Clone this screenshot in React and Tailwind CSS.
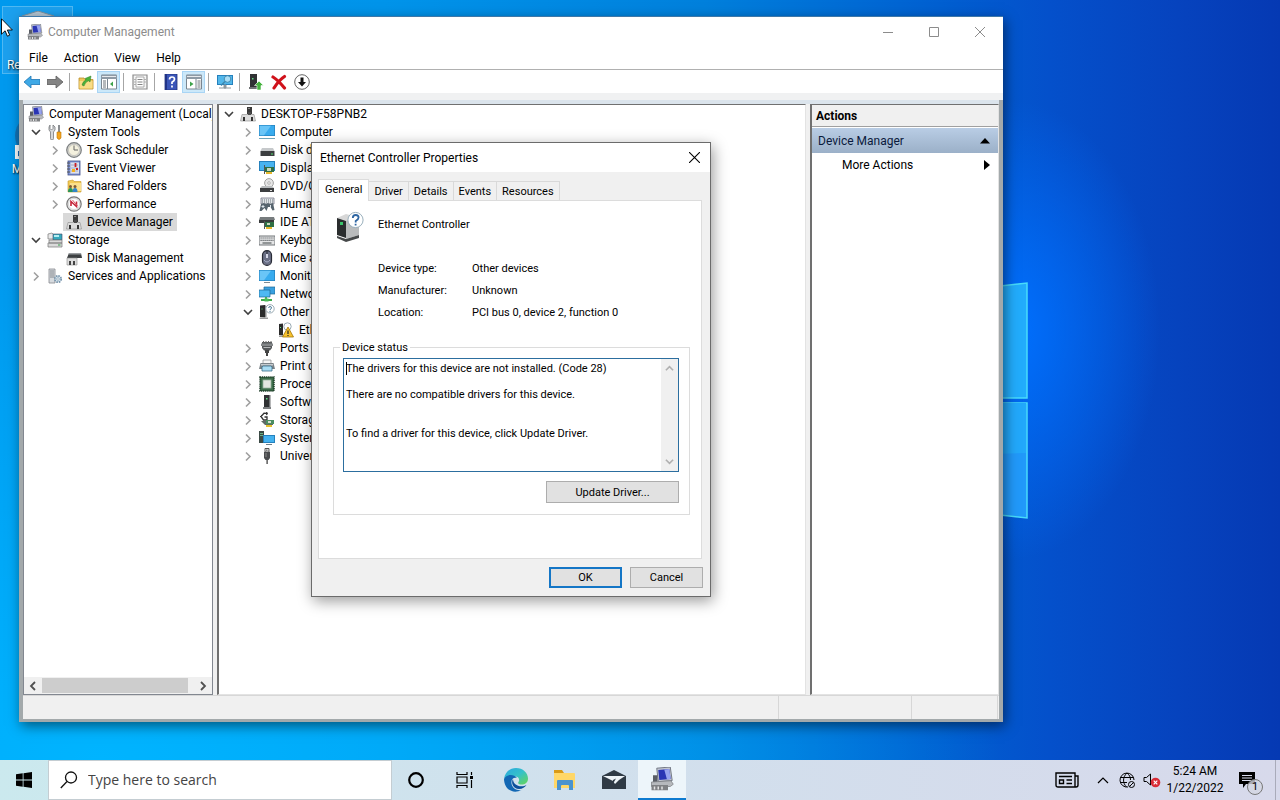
import { useState } from 'react'

const ICONS = {
  pc: (
    <>
      <path d="M4.500.800L13.500 0l1.300 9-9.300.8z" fill="#c3c7d2" stroke="#6a6f7c" strokeWidth=".6" />
      <path d="M5.500 2l7.300-.7 1 6.700-7.600.7z" fill="#2a35b4" />
      <path d="M9.500 1.600l3.300-.3 1 6.700-2.500.3z" fill="#97a3ee" />
      <path d="M2 5.500h3V10H2z" fill="#595d65" />
      <path d="M1 10l13-.8 1.500 2.300-2 1.500H1z" fill="#b6b9bd" stroke="#7c7f83" strokeWidth=".5" />
      <path d="M1 12h11v3.500H1z" fill="#7f8184" />
      <path d="M2.500 13h1v2h-1zM5 13h1v2H5zM7.500 13h1v2h-1z" fill="#e4e4e4" />
    </>
  ),
  tools: (
    <>
      <path d="M3 1v3.500L4.500 6 6 4.500V1l2 2v3L6.500 8v6.500a1.500 1.500 0 01-3 0V8L2 6V3z" fill="#d6d8da" stroke="#77797c" strokeWidth=".8" />
      <path d="M11 1h2v7h-2z" fill="#8b8e92" />
      <path d="M10 8h4v6q-2 3-4 0z" fill="#f5a51d" stroke="#bd7608" strokeWidth=".6" />
    </>
  ),
  clock: (
    <>
      <circle cx="8" cy="8" r="7.300" fill="#d5d5cf" stroke="#7c7f80" strokeWidth="1.200" />
      <circle cx="8" cy="8" r="5.500" fill="#f4f1de" stroke="#aaa" strokeWidth=".5" />
      <path d="M8 3.500V8h4" fill="none" stroke="#666" strokeWidth="1" />
    </>
  ),
  event: (
    <>
      <rect x="2" y="1" width="12" height="14" fill="#8197d8" stroke="#42508c" strokeWidth=".8" />
      <rect x="4.500" y="2.500" width="8.500" height="11" fill="#dfe1ea" />
      <path d="M5 5h7M5 8h7M5 11h7" stroke="#8e9ac4" strokeWidth=".8" />
      <path d="M1 3h3M1 6h3M1 9h3M1 12h3" stroke="#555" strokeWidth="1" />
      <path d="M9.500 3v4" stroke="#c91f25" strokeWidth="1.800" />
      <path d="M6 9h3v3H6z" fill="#f3b020" />
      <path d="M10 8h2v2h-2z" fill="#c91f25" />
    </>
  ),
  shared: (
    <>
      <path d="M2 3l5-1 1 1.500h7V14H2z" fill="#f3cb55" stroke="#c4952a" strokeWidth=".6" />
      <path d="M4 5h11v8H4z" fill="#fbe08b" />
      <circle cx="4.500" cy="8.500" r="1.500" fill="#7d5a36" />
      <path d="M2 14q0-4 2.500-4T7 14z" fill="#28955b" />
      <circle cx="9" cy="8.500" r="1.500" fill="#7d5a36" />
      <path d="M6.500 14q0-4 2.500-4t2.500 4z" fill="#3485c7" />
    </>
  ),
  perf: (
    <>
      <circle cx="8" cy="8" r="7.200" fill="#e9e9e9" stroke="#777" strokeWidth="1.200" />
      <circle cx="8" cy="8" r="5.500" fill="#fff" stroke="#bbb" strokeWidth=".5" />
      <path d="M5 10V5.500l5.500 5V5.500" fill="none" stroke="#c52339" strokeWidth="1.600" />
      <path d="M6.500 4l5 6" stroke="#d85a68" strokeWidth="1" />
    </>
  ),
  device: (
    <>
      <path d="M7 1h5v7H7z" fill="#3a3a3a" />
      <path d="M8 2h2v1H8z" fill="#8c8c8c" />
      <path d="M2 8.500h12l1.500 6.500H.5z" fill="#dcdcdc" stroke="#8c8c8c" strokeWidth=".6" />
      <path d="M3 11h2v4H3zM11 11h2v4h-2z" fill="#333" />
      <path d="M8 6h3v3H8z" fill="#4b4b4b" />
    </>
  ),
  storage: (
    <>
      <path d="M1 2l4-1 2 2v4H1z" fill="#e8e8e8" stroke="#777" strokeWidth=".7" />
      <path d="M6 2h9v6H6z" fill="#35a9bd" stroke="#446" strokeWidth=".6" />
      <path d="M7 3h5v2H7z" fill="#b5edf1" />
      <path d="M2 8h13v3H2zM1 11h14v4H1z" fill="#dadada" stroke="#777" strokeWidth=".7" />
      <path d="M11 12.500h2.500v1H11z" fill="#35a04a" />
    </>
  ),
  diskmgmt: (
    <>
      <path d="M3 3h12l1 5H1z" fill="#3d4042" />
      <path d="M3 3h12v1.500H2.600z" fill="#9a9da0" />
      <path d="M1 8h10v7H1z" fill="#dedede" stroke="#8b8b8b" strokeWidth=".6" />
      <path d="M3 11h2v4H3zM7 11h2v4H7z" fill="#444" />
    </>
  ),
  services: (
    <>
      <path d="M2 1h6v14H2z" fill="#d7dbdf" stroke="#85898d" strokeWidth=".8" />
      <path d="M3 3h4M3 5h4M3 7h4M3 9h4" stroke="#72777b" strokeWidth=".8" />
      <circle cx="11" cy="11" r="3.200" fill="#dbe6ee" stroke="#7795ac" strokeWidth="1.700" strokeDasharray="1.600 .9" />
      <circle cx="11" cy="11" r="1.300" fill="#fff" stroke="#7795ac" strokeWidth=".7" />
    </>
  ),
  monitor: (
    <>
      <path d="M0 1h16v11H0z" fill="#2581bd" />
      <path d="M.7 1.700h14.600v9.600H.7z" fill="#38abee" />
      <path d="M.7 1.700H12L5 11.300H.7z" fill="#6ac5f7" />
      <path d="M0 14.500h16" stroke="#6fa5bb" strokeWidth="1" />
    </>
  ),
  screen: (
    <>
      <path d="M0 2h16v11H0z" fill="#2581bd" />
      <path d="M.7 2.700h14.600v9.600H.7z" fill="#38abee" />
      <path d="M.7 2.700H12L5 12.300H.7z" fill="#6ac5f7" />
      <path d="M5 14h6v1H5z" fill="#7e8b93" />
    </>
  ),
  disk: (
    <>
      <path d="M3 6h11l1.500 3h-14z" fill="#c6c9cb" />
      <path d="M1.500 9h14v5h-14z" fill="#3c3e40" />
      <path d="M12 11.500h2v1h-2z" fill="#4fe06a" />
    </>
  ),
  display: (
    <>
      <path d="M0 1h16v10H0z" fill="#2581bd" />
      <path d="M1 2h14v8H1z" fill="#48b3ef" />
      <path d="M6 7h9v5H6z" fill="#2f7045" />
      <path d="M8 8h4v3H8z" fill="#c9d7bd" />
      <path d="M7 12h6v2H7z" fill="#e6b62c" />
      <path d="M5 5h1v9H5z" fill="#555" />
    </>
  ),
  dvd: (
    <>
      <circle cx="10" cy="5" r="4.400" fill="#e6e6e6" stroke="#8d8d8d" strokeWidth=".8" />
      <circle cx="10" cy="5" r="1.300" fill="#fff" stroke="#888" strokeWidth=".6" />
      <path d="M3 8h10l2 2H1z" fill="#b9bcbe" />
      <path d="M1 10h14v4H1z" fill="#3c3e40" />
      <path d="M11 12h2v1h-2z" fill="#ddd" />
    </>
  ),
  hid: (
    <>
      <path d="M2 2h13v6H2z" fill="#e0e4e7" stroke="#778" strokeWidth=".8" />
      <path d="M3 4h11M3 6h11" stroke="#69757d" strokeWidth="1" strokeDasharray="1 1" />
      <path d="M2 8l3-1 2 1 2-1 2 1 3-1 1.500 7-2 .5-2-3.500H9L7.500 15l-2-3-3 3H.5z" fill="#56646e" />
      <path d="M4 9v3M2.500 10.500h3M11.500 9v3" stroke="#dfe7ee" strokeWidth="1" />
    </>
  ),
  ide: (
    <>
      <path d="M1 3h14l1 3H0z" fill="#777c7e" />
      <path d="M0 6h15v3H0z" fill="#393b3c" />
      <path d="M6 8h9v5H6z" fill="#2f7045" />
      <path d="M8 9h3v2H8z" fill="#c9d7bd" />
      <path d="M7 13h6v2H7z" fill="#e6b62c" />
      <path d="M5 7h1v8H5z" fill="#555" />
    </>
  ),
  keyboard: (
    <>
      <rect x="0" y="4" width="16" height="9" fill="#e4e5e6" stroke="#63676a" strokeWidth=".9" />
      <path d="M1.500 6h13M1.500 8.300h13" stroke="#5b5f62" strokeWidth="1.200" strokeDasharray="1.200 .8" />
      <path d="M3.500 11h9" stroke="#5b5f62" strokeWidth="1.200" />
    </>
  ),
  mouse: (
    <>
      <rect x="3.500" y=".6" width="9" height="14.800" rx="4.500" fill="#6b7086" stroke="#282b36" strokeWidth="1.200" />
      <path d="M8 1v7" stroke="#22242c" strokeWidth="1" />
      <path d="M7 4h2v4H7z" fill="#d5d8e8" />
      <path d="M5 10q3 4 6 0" fill="none" stroke="#a7adc7" strokeWidth="1" />
    </>
  ),
  network: (
    <>
      <path d="M5 1h11v7H5z" fill="#39a0df" stroke="#1e6797" strokeWidth=".7" />
      <path d="M0 4h11v7H0z" fill="#4fb9f2" stroke="#1e6797" strokeWidth=".7" />
      <path d="M7 11v2M2 14h11" stroke="#3eaa4c" strokeWidth="1.800" />
      <path d="M5.500 12.500h4v3h-4z" fill="#4cbd59" />
    </>
  ),
  other: (
    <>
      <path d="M1 1.500l5-.5v12.500L1 13z" fill="#2b2b2b" />
      <path d="M6 1l1.500 1v11L6 13.500z" fill="#8a8a8a" />
      <path d="M1 13.500h8V15H.5z" fill="#9c9c9c" />
      <path d="M2.500 4.500h1v1h-1z" fill="#54e07a" />
      <circle cx="11" cy="4.800" r="4.200" fill="#fff" stroke="#8fa0aa" strokeWidth=".9" />
      <path d="M9.700 4q0-1.500 1.400-1.500T12.500 4q0 .7-1.400 1.500v.7M11 7v1" fill="none" stroke="#4a7c99" strokeWidth="1" />
    </>
  ),
  unknown: (
    <>
      <path d="M1 2l4-.5v12L1 13z" fill="#2b2b2b" />
      <path d="M1 13.500h5V15H1z" fill="#9c9c9c" />
      <path d="M2 5h1v1H2z" fill="#54e07a" />
      <circle cx="9.500" cy="4.500" r="3.700" fill="#fff" stroke="#8fa0aa" strokeWidth=".9" />
      <path d="M10 5l5.500 10h-11z" fill="#f8c22c" stroke="#a2760a" strokeWidth=".8" />
      <path d="M10 8.500v3.500M10 13v1" stroke="#222" strokeWidth="1.200" />
    </>
  ),
  port: (
    <>
      <path d="M3 2h10v6l-2 2.500H5L3 8z" fill="#55585a" />
      <path d="M2 3.500h12v2.500H2z" fill="#85888a" />
      <path d="M4.500 1v2M7 1v2M9.500 1v2M12 1v2" stroke="#666" strokeWidth="1" />
      <path d="M6 10h4v3H6zM7 13h2v3H7z" fill="#444" />
      <path d="M4.500 7.500h7" stroke="#b5b7b9" strokeWidth="1" />
    </>
  ),
  printer: (
    <>
      <path d="M4 2h8v4H4z" fill="#f6f6f6" stroke="#8a8d8f" strokeWidth=".7" />
      <path d="M1.500 5h13L16 11H0z" fill="#7a8287" />
      <path d="M2 6h12v1.500H2z" fill="#c6ccd0" />
      <path d="M3 9l1-1h8l1 1v4H3z" fill="#a9dcf3" stroke="#3b6f8a" strokeWidth=".8" />
    </>
  ),
  cpu: (
    <>
      <rect x="1" y="1" width="14" height="14" fill="#3c6d4a" stroke="#1d3d28" strokeWidth="1.500" strokeDasharray="1.200 .7" />
      <rect x="4" y="4" width="8" height="8" fill="#e3e6e1" stroke="#9bb3a0" strokeWidth=".8" />
    </>
  ),
  software: (
    <>
      <path d="M5 1h6v12H5z" fill="#303234" />
      <path d="M10 1h1.500v12H10z" fill="#6e7173" />
      <path d="M7 4h1.500v1.500H7z" fill="#5fe083" />
      <path d="M4 13h8v2H4z" fill="#7c7f81" />
    </>
  ),
  storagectl: (
    <>
      <path d="M8 1.500L5 1.200 2 4.500 4.500 8H8V5H5.500" fill="none" stroke="#333" strokeWidth="1.300" />
      <path d="M7 0l2 1.500L7 3M3 3L1 5" fill="none" stroke="#333" strokeWidth="1" />
      <path d="M2 9h12v4H6z" fill="#5f6b65" />
      <path d="M7 8h8v4H7z" fill="#4b8f62" />
      <path d="M9 9h3v2H9z" fill="#d8dfcf" />
      <path d="M7 13h6v2H7z" fill="#e6c12c" />
    </>
  ),
  system: (
    <>
      <path d="M0 1h5v12H0z" fill="#3b4a45" />
      <path d="M1 3h3v1H1zM1 5h3v1H1z" fill="#68b083" />
      <path d="M4 5h12v8H4z" fill="#2581bd" />
      <path d="M5 6h10v6H5z" fill="#44b2ef" />
      <path d="M7 14h6v1H7z" fill="#6d7d86" />
    </>
  ),
  usb: (
    <>
      <path d="M6 .500h4v3.500H6z" fill="#fff" stroke="#555" strokeWidth="1" />
      <path d="M7 1.500h.8v1.300H7zM8.500 1.500h.8v1.300h-.8z" fill="#333" />
      <path d="M5 4h6v6l-1.500 2h-3L5 10z" fill="#4a4c4e" />
      <path d="M6.500 5h1v4h-1z" fill="#888" />
      <path d="M7.500 12h1.200v4H7.500z" fill="#333" />
    </>
  ),
  back: <path d="M0 8l7-6v3.500h9v5H7V14z" fill="#3fa9e6" stroke="#1f77b5" strokeWidth=".8" />,
  forward: <path d="M16 8L9 2v3.500H0v5h9V14z" fill="#848484" stroke="#5d5d5d" strokeWidth=".8" />,
  up: (
    <>
      <path d="M1 4h5l1 1.500h8V15H1z" fill="#f0c75a" stroke="#b98d28" strokeWidth=".8" />
      <path d="M1.500 7h13v7.500h-13z" fill="#f9dd86" />
      <path d="M4 11q1-4 4-5L7 4.500 13 2l-1 6-1.500-1.200Q7 8 6 12z" fill="#4bb33b" stroke="#2f7d26" strokeWidth=".5" />
    </>
  ),
  consoleTree: (
    <>
      <path d="M.5 1h15v14H.5z" fill="#fff" stroke="#7a8691" strokeWidth="1" />
      <path d="M0 1h16v4H0z" fill="#8e9aa5" />
      <path d="M1 2.500h14" stroke="#fff" strokeWidth=".8" />
      <path d="M6.500 5v10" stroke="#7a8691" strokeWidth="1" />
      <path d="M2 7h3M2 9h3M2 11h3M2 13h3" stroke="#5b646c" strokeWidth=".9" />
      <path d="M12 7.500v5L9 10z" fill="#3ea34b" />
    </>
  ),
  actionPane: (
    <>
      <path d="M.5 1h15v14H.5z" fill="#fff" stroke="#7a8691" strokeWidth="1" />
      <path d="M0 1h16v4H0z" fill="#8e9aa5" />
      <path d="M1 2.500h14" stroke="#fff" strokeWidth=".8" />
      <path d="M10 5v10" stroke="#7a8691" strokeWidth="1" />
      <path d="M11.500 7h3M11.500 9h3M11.500 11h3M11.500 13h3" stroke="#5b646c" strokeWidth=".9" />
      <path d="M4 7.500v5L7.500 10z" fill="#3ea34b" />
    </>
  ),
  props: (
    <>
      <path d="M1 1h14v14H1z" fill="#f5f5f5" stroke="#8d8d8d" strokeWidth="1.200" />
      <path d="M4 3h8v10H4z" fill="#fff" stroke="#999" strokeWidth=".8" />
      <path d="M5.500 5.500h5M5.500 8h5M5.500 10.500h5" stroke="#777" strokeWidth=".9" />
      <path d="M2 5.500h2M2 8h2M2 10.500h2M12 5.500h2M12 8h2" stroke="#aaa" strokeWidth=".9" />
    </>
  ),
  help: (
    <>
      <path d="M2 0h12v16H2z" fill="#3a55b8" stroke="#203078" strokeWidth=".8" />
      <path d="M2 0h2v16H2z" fill="#213487" />
      <path d="M6.500 5.500q0-2.500 2.500-2.500t2.500 2.300q0 1.500-2.500 3V10M9 11.500v2" fill="none" stroke="#fff" strokeWidth="1.700" />
    </>
  ),
  scan: (
    <>
      <path d="M0 1h16v10H0z" fill="#2581bd" />
      <path d="M1 2h14v8H1z" fill="#52b7ea" />
      <circle cx="10.500" cy="5" r="3.300" fill="#a9def7" stroke="#3c86ad" strokeWidth=".9" />
      <path d="M8 7.500L4 11.500" stroke="#3c86ad" strokeWidth="1.500" />
      <path d="M2 14h12M7 11h2v3H7z" fill="#8d989e" stroke="#8d989e" strokeWidth="1" />
    </>
  ),
  update: (
    <>
      <path d="M2 0h7v13H2z" fill="#303234" />
      <path d="M4 4h1.500v1.500H4z" fill="#5fe083" />
      <path d="M1 13h8v2H1z" fill="#707375" />
      <path d="M11 7l4.500 4.500h-2.500V16H9v-4.500H6.500z" fill="#45b23e" stroke="#fff" strokeWidth=".6" />
    </>
  ),
  remove: <path d="M2 3q5 3 11.500 11M13.500 2.500Q8 6 3 14" fill="none" stroke="#d0121b" strokeWidth="3.200" strokeLinecap="round" />,
  disable: (
    <>
      <circle cx="8" cy="8" r="7.300" fill="#fff" stroke="#666" strokeWidth="1" />
      <path d="M6.500 3.500h3V8H12l-4 4.500L4 8h2.500z" fill="#111" />
    </>
  ),
}

function Icon({ name, className = 'size-4' }) {
  return (
    <svg viewBox="0 0 16 16" className={`${className} shrink-0`} aria-hidden="true">
      {ICONS[name]}
    </svg>
  )
}

const CONSOLE_TREE = [
  { level: 0, icon: 'pc', label: 'Computer Management (Local)' },
  { level: 1, icon: 'tools', label: 'System Tools', state: 'open' },
  { level: 2, icon: 'clock', label: 'Task Scheduler', state: 'closed' },
  { level: 2, icon: 'event', label: 'Event Viewer', state: 'closed' },
  { level: 2, icon: 'shared', label: 'Shared Folders', state: 'closed' },
  { level: 2, icon: 'perf', label: 'Performance', state: 'closed' },
  { level: 2, icon: 'device', label: 'Device Manager', selected: true },
  { level: 1, icon: 'storage', label: 'Storage', state: 'open' },
  { level: 2, icon: 'diskmgmt', label: 'Disk Management' },
  { level: 1, icon: 'services', label: 'Services and Applications', state: 'closed' },
]

const DEVICE_TREE = [
  { level: 1, icon: 'device', label: 'DESKTOP-F58PNB2', state: 'open' },
  { level: 2, icon: 'monitor', label: 'Computer', state: 'closed' },
  { level: 2, icon: 'disk', label: 'Disk drives', state: 'closed' },
  { level: 2, icon: 'display', label: 'Display adapters', state: 'closed' },
  { level: 2, icon: 'dvd', label: 'DVD/CD-ROM drives', state: 'closed' },
  { level: 2, icon: 'hid', label: 'Human Interface Devices', state: 'closed' },
  { level: 2, icon: 'ide', label: 'IDE ATA/ATAPI controllers', state: 'closed' },
  { level: 2, icon: 'keyboard', label: 'Keyboards', state: 'closed' },
  { level: 2, icon: 'mouse', label: 'Mice and other pointing devices', state: 'closed' },
  { level: 2, icon: 'screen', label: 'Monitors', state: 'closed' },
  { level: 2, icon: 'network', label: 'Network adapters', state: 'closed' },
  { level: 2, icon: 'other', label: 'Other devices', state: 'open' },
  { level: 3, icon: 'unknown', label: 'Ethernet Controller' },
  { level: 2, icon: 'port', label: 'Ports (COM & LPT)', state: 'closed' },
  { level: 2, icon: 'printer', label: 'Print queues', state: 'closed' },
  { level: 2, icon: 'cpu', label: 'Processors', state: 'closed' },
  { level: 2, icon: 'software', label: 'Software devices', state: 'closed' },
  { level: 2, icon: 'storagectl', label: 'Storage controllers', state: 'closed' },
  { level: 2, icon: 'system', label: 'System devices', state: 'closed' },
  { level: 2, icon: 'usb', label: 'Universal Serial Bus controllers', state: 'closed' },
]

const LEVEL_PAD = ['pl-0', 'pl-0', 'pl-[19px]', 'pl-[38px]']

const TOOLBAR = [
  ['back', 'forward'],
  ['up', 'consoleTree'],
  ['props'],
  ['help', 'actionPane'],
  ['scan'],
  ['update', 'remove', 'disable'],
]

const TOOL_LABELS = {
  back: 'Back',
  forward: 'Forward',
  up: 'Up one level',
  consoleTree: 'Show/Hide Console Tree',
  props: 'Properties',
  help: 'Help',
  actionPane: 'Show/Hide Action Pane',
  scan: 'Scan for hardware changes',
  update: 'Update driver',
  remove: 'Uninstall device',
  disable: 'Disable device',
}

const STATUS_TEXT = `The drivers for this device are not installed. (Code 28)

There are no compatible drivers for this device.


To find a driver for this device, click Update Driver.`

function Twisty({ state }) {
  return (
    <svg viewBox="0 0 16 16" className="w-4 h-4 shrink-0" fill="none" strokeWidth="1.600" aria-hidden="true">
      {state === 'open' && <path d="M4 6l4 4 4-4" stroke="#404040" />}
      {state === 'closed' && <path d="M6 4.500l4 4-4 4" stroke="#a0a0a0" />}
    </svg>
  )
}

function Tree({ items, label, className = 'pl-1' }) {
  return (
    <ul role="tree" aria-label={label} className={className}>
      {items.map(item => (
        <li
          key={item.label}
          role="treeitem"
          aria-level={item.level + 1}
          aria-selected={!!item.selected}
          className={`flex h-[18px] items-center ${LEVEL_PAD[item.level]}`}
        >
          {item.level > 0 && <Twisty state={item.state} />}
          <span className={`flex h-full items-center gap-[5px] whitespace-nowrap pr-1 ${item.level > 0 ? 'pl-[3px]' : ''} ${item.selected ? 'bg-[#d9d9d9]' : ''}`}>
            <Icon name={item.icon} />
            {item.label}
          </span>
        </li>
      ))}
    </ul>
  )
}

function Toolbar() {
  return (
    <div className="flex h-[23px] shrink-0 items-center bg-white pl-px" role="toolbar">
      {TOOLBAR.map((group, i) => (
        <div key={group[0]} className="flex items-center">
          {i > 0 && <span className="mr-1 ml-[3px] h-[18px] w-px bg-[#a6a6a6]" />}
          {group.map(name => (
            <button
              key={name}
              type="button"
              aria-label={TOOL_LABELS[name]}
              className={`flex h-[22px] w-[23px] items-center justify-center ${
                name === 'consoleTree' || name === 'actionPane' ? 'border border-[#a9d5f5] bg-[#cce8f9]' : ''
              }`}
            >
              <Icon name={name} />
            </button>
          ))}
        </div>
      ))}
    </div>
  )
}

function ManagementWindow() {
  return (
    <section
      aria-label="Computer Management"
      className="absolute top-4 right-[277px] bottom-[38px] left-[19px] flex flex-col bg-white text-xs text-black border-t border-[#3f78a8] shadow-[2px_4px_12px_rgba(0,0,0,0.5)]"
    >
      <header className="flex h-[30px] shrink-0 items-center pl-2">
        <Icon name="pc" />
        <h1 className="flex-1 pl-[5px] text-[#8c8c8c]">Computer Management</h1>
        <button type="button" aria-label="Minimize" className="flex h-full w-[46px] items-center justify-center">
          <svg viewBox="0 0 10 10" className="size-[10px]"><path d="M0 5.500h10" stroke="#8c8c8c" /></svg>
        </button>
        <button type="button" aria-label="Maximize" className="flex h-full w-[46px] items-center justify-center">
          <svg viewBox="0 0 10 10" className="size-[10px]"><path d="M.5.500h9v9h-9z" fill="none" stroke="#8c8c8c" /></svg>
        </button>
        <button type="button" aria-label="Close" className="flex h-full w-[46px] items-center justify-center">
          <svg viewBox="0 0 10 10" className="size-[10px]"><path d="M0 0l10 10M10 0L0 10" stroke="#8c8c8c" /></svg>
        </button>
      </header>

      <nav className="flex h-[23px] shrink-0 items-center border-b border-[#b0b0b0] pl-[2px]">
        {['File', 'Action', 'View', 'Help'].map(m => (
          <button key={m} type="button" className="px-2">{m}</button>
        ))}
      </nav>

      <Toolbar />
      <div className="h-[7px] shrink-0 bg-[#f0f1f2]" />

      <div className="flex min-h-0 flex-1 flex-col border-x-4 border-b-3 border-[#a3a9ab]">
        <div className="flex min-h-0 flex-1 gap-1 bg-[#f0f0f0] border-t-4 border-[#dbe4ec]">
          <aside className="flex w-[190px] shrink-0 flex-col border border-[#828790] bg-white">
            <div className="flex-1 overflow-hidden">
              <Tree items={CONSOLE_TREE} label="Console tree" />
            </div>
            <div className="flex h-[17px] items-center bg-[#f0f0f0]">
              <button type="button" aria-label="Scroll left" className="flex w-[18px] justify-center">
                <svg viewBox="0 0 10 10" className="size-[10px]"><path d="M7 1L3 5l4 4" fill="none" stroke="#505050" strokeWidth="1.800" /></svg>
              </button>
              <span className="h-[15px] w-[146px] bg-[#cdcdcd]" />
              <button type="button" aria-label="Scroll right" className="ml-auto flex w-[18px] justify-center">
                <svg viewBox="0 0 10 10" className="size-[10px]"><path d="M3 1l4 4-4 4" fill="none" stroke="#505050" strokeWidth="1.800" /></svg>
              </button>
            </div>
          </aside>

          <main className="min-w-0 flex-1 border border-l-2 border-[#707070] border-r-[#e3e3e3] border-b-[#e3e3e3] bg-white">
            <Tree items={DEVICE_TREE} label="Devices" className="pl-[2px]" />
          </main>

          <aside className="w-[189px] shrink-0 border border-l-2 border-[#707070] border-r-[#e3e3e3] border-b-[#e3e3e3] bg-white">
            <h2 className="h-[22px] border-b border-[#a0a0a0] bg-[#f0f0f0] pl-1 leading-[22px] font-bold">Actions</h2>
            <button type="button" className="mt-px flex h-[25px] w-full items-center justify-between bg-linear-to-b from-[#b9cde5] to-[#9bb0c8] pr-2 pl-[6px] text-[#0b1a3c]">
              Device Manager
              <svg viewBox="0 0 10 6" className="h-[6px] w-[10px]"><path d="M5 0l5 5.500H0z" fill="#000" /></svg>
            </button>
            <button type="button" className="flex h-6 w-full items-center justify-between pr-2 pl-[30px]">
              More Actions
              <svg viewBox="0 0 6 10" className="h-[10px] w-[6px]"><path d="M0 0l6 5-6 5z" fill="#000" /></svg>
            </button>
          </aside>
        </div>

        <footer className="flex h-[24px] shrink-0 justify-end border-t border-[#d7d7d7] bg-[#f0f0f0]">
          <span className="w-[133px] border-l border-[#d7d7d7]" />
          <span className="mr-px w-[87px] border-x border-[#d7d7d7]" />
        </footer>
      </div>
    </section>
  )
}

function DialogIcon() {
  return (
    <svg viewBox="0 0 32 32" className="size-8" aria-hidden="true">
      <path d="M1 7l9-4 11 3-11 5z" fill="#d8d8d8" />
      <path d="M1 7l9 3v17l-9-3z" fill="#2a2d2e" />
      <path d="M10 10l13-4v18l-13 4z" fill="#b9bbbc" />
      <path d="M1 25l9 3 13-4v3l-13 4-9-4z" fill="#46494a" />
      <path d="M4 11h3v3H4z" fill="#39c46b" />
      <circle cx="19.500" cy="9" r="7.600" fill="#fff" stroke="#9ab0bd" strokeWidth="1" />
      <path d="M16.800 7q0-3 2.900-3t2.900 2.600q0 1.700-2.900 3.400V11.500M19.600 12.800v1.700" fill="none" stroke="#2e66a3" strokeWidth="1.800" />
    </svg>
  )
}

function PropertiesDialog() {
  const [tab, setTab] = useState('General')
  const rows = [
    ['Device type:', 'Other devices'],
    ['Manufacturer:', 'Unknown'],
    ['Location:', 'PCI bus 0, device 2, function 0'],
  ]

  return (
    <section
      role="dialog"
      aria-labelledby="props-title"
      className="absolute top-[142px] left-[311px] w-[400px] border border-[#6b6b6b] bg-[#f0f0f0] pb-2 text-[11px] leading-[13px] text-black shadow-[2px_4px_14px_rgba(0,0,0,0.4)]"
    >
      <header className="flex h-[29px] items-center justify-between bg-white pl-2">
        <h2 id="props-title" className="text-xs">Ethernet Controller Properties</h2>
        <button type="button" aria-label="Close" className="flex h-full w-[31px] items-center justify-center">
          <svg viewBox="0 0 10 10" className="size-[11px]"><path d="M0 0l10 10M10 0L0 10" stroke="#000" /></svg>
        </button>
      </header>

      <div className="pt-[7px] pr-2 pl-[6px]">
        <div role="tablist" className="flex items-end">
          {['General', 'Driver', 'Details', 'Events', 'Resources'].map(t => (
            <button
              key={t}
              type="button"
              role="tab"
              aria-selected={t === tab}
              onClick={() => setTab(t)}
              className={
                t === tab
                  ? 'z-10 -mb-px h-[22px] border border-b-0 border-[#dcdcdc] bg-white px-[6px] pb-[3px]'
                  : 'h-[19px] border border-b-0 border-l-0 border-[#d9d9d9] px-[5px]'
              }
            >
              {t}
            </button>
          ))}
        </div>

        <div role="tabpanel" className="border border-[#dcdcdc] bg-white px-[14px] pt-[10px] pb-[43px]">
          <div className="flex gap-[10px] pl-[3px]">
            <DialogIcon />
            <p className="pt-[7px]">Ethernet Controller</p>
          </div>
          <dl className="grid grid-cols-[94px_1fr] gap-y-[9px] pt-[19px] pl-[45px]">
            {rows.map(([k, v]) => (
              <div key={k} className="contents">
                <dt>{k}</dt>
                <dd>{v}</dd>
              </div>
            ))}
          </dl>

          <fieldset className="mt-[22px] mr-[-3px] border border-[#dcdcdc] pr-[10px] pb-[11px] pl-[9px]">
            <legend className="-ml-[3px] px-[2px]">
              <label htmlFor="status">Device status</label>
            </legend>
            <div className="relative mt-1 flex h-[114px] border border-[#2c6e9f] bg-white">
              <textarea
                id="status"
                readOnly
                value={STATUS_TEXT}
                className="block flex-1 resize-none overflow-hidden bg-white px-[2px] pt-[3px] outline-none"
              />
              <span className="absolute top-[3px] left-[2px] h-[13px] w-px bg-black" />
              <div className="flex w-[17px] flex-col items-center justify-between bg-[#f0f0f0] py-[5px]">
                <svg viewBox="0 0 10 10" className="size-[9px]"><path d="M1 7l4-4 4 4" fill="none" stroke="#b0b0b0" strokeWidth="1.800" /></svg>
                <svg viewBox="0 0 10 10" className="size-[9px]"><path d="M1 3l4 4 4-4" fill="none" stroke="#b0b0b0" strokeWidth="1.800" /></svg>
              </div>
            </div>
            <div className="mt-[9px] flex justify-end">
              <button type="button" className="h-[22px] w-[133px] border border-[#adadad] bg-[#e1e1e1]">Update Driver...</button>
            </div>
          </fieldset>
        </div>
      </div>

      <div className="flex justify-end gap-2 px-[7px] pt-2">
        <button type="button" className="h-[21px] w-[73px] border-2 border-[#1476c6] bg-[#e1e1e1]">OK</button>
        <button type="button" className="h-[21px] w-[73px] border border-[#adadad] bg-[#e1e1e1]">Cancel</button>
      </div>
    </section>
  )
}

function Wallpaper() {
  return (
    <>
      <div className="absolute inset-0 bg-[linear-gradient(90deg,#0099ee_0%,#0094ea_30%,#0080dc_55%,#0062d2_72%,#0450cb_82%,#0643be_92%,#0539b3_100%)]" />
      <div className="absolute inset-0 bg-[radial-gradient(ellipse_150px_230px_at_1010px_330px,#0070ff,transparent)]" />
      <div className="absolute inset-0 bg-[radial-gradient(ellipse_900px_500px_at_100px_760px,#00b4ff,transparent)]" />
      <svg viewBox="0 0 100 240" className="absolute top-[280px] left-[928px] h-[240px] w-[100px]" aria-hidden="true">
        <path d="M0 14l99-11v115H0z" fill="#22acfc" stroke="#48dcfb" strokeWidth="1.500" />
        <path d="M0 123h99v115L0 227z" fill="#2199fa" stroke="#48dcfb" strokeWidth="1.500" />
        <path d="M0 123h98v50l-98 3z" fill="#22a8fb" />
      </svg>
    </>
  )
}

function DesktopIcons() {
  return (
    <>
      <div className="absolute top-[6px] left-[2px] flex h-[68px] w-[71px] flex-col items-center justify-between border border-[#4fb8f2] bg-[#2fa5ee]/60 text-xs text-white">
        <svg viewBox="0 0 40 44" className="mt-1 h-11 w-10" aria-hidden="true">
          <path d="M4 5l16-5 16 5-4 38H8z" fill="#b4c6d4" stroke="#80929f" />
          <path d="M4 5l16 4 16-4" fill="none" stroke="#7b8b97" />
        </svg>
        <span className="whitespace-nowrap [text-shadow:1px_1px_2px_#000]">Recycle Bin</span>
      </div>
      <div className="absolute top-[112px] left-[2px] flex w-[71px] flex-col items-center text-xs text-white">
        <svg viewBox="0 0 48 48" className="size-12" aria-hidden="true">
          <circle cx="24" cy="24" r="23" fill="#1375b8" />
          <path d="M1 33h14v14H1z" fill="#fff" />
          <path d="M4 44v-5h5v-3l4 5-4 4" fill="#1c66b0" />
        </svg>
        <span className="pt-[2px] text-center leading-[15px] [text-shadow:1px_1px_2px_#000]">Microsoft Edge</span>
      </div>
    </>
  )
}

function Cursor() {
  return (
    <svg viewBox="0 0 12 19" className="absolute top-[18px] left-px h-[19px] w-3" aria-hidden="true">
      <path d="M.5.800v15.400l3.600-3.400 2.300 5.400 2.300-1-2.300-5.200h5z" fill="#fff" stroke="#000" strokeWidth=".9" />
    </svg>
  )
}

function Taskbar() {
  const btn = 'flex h-full w-[49px] items-center justify-center'
  return (
    <footer className="flex h-10 shrink-0 items-center bg-linear-to-r from-[#cbe9ee] via-[#d0e1ed] via-40% to-[#d7d9eb] text-xs text-black">
      <button type="button" aria-label="Start" className="flex h-full w-12 items-center justify-center">
        <svg viewBox="0 0 16 16" className="size-4">
          <path d="M0 2.300l6.700-1v6.300H0zM7.500 1.200L16 0v7.600H7.500zM0 8.400h6.700v6.300l-6.700-1zM7.500 8.400H16V16l-8.500-1.200z" fill="#000" />
        </svg>
      </button>
      <label className="flex h-full w-[344px] items-center border border-[#c4cdd2] bg-white pl-[11px]">
        <svg viewBox="0 0 18 18" className="size-[18px] shrink-0" fill="none" stroke="#111" strokeWidth="1.300">
          <circle cx="11" cy="6.500" r="5.500" />
          <path d="M7 10.500L.8 17" />
        </svg>
        <input
          type="text"
          aria-label="Search"
          placeholder="Type here to search"
          className="ml-[10px] w-full bg-transparent font-['Open_Sans','Noto_Sans',sans-serif] text-sm text-[#444] outline-none placeholder:text-[#444]"
        />
      </label>

      <button type="button" aria-label="Cortana" className="flex h-full w-12 items-center justify-center">
        <svg viewBox="0 0 18 18" className="size-[18px]"><circle cx="9" cy="9" r="6.800" fill="none" stroke="#000" strokeWidth="2.200" /></svg>
      </button>
      <button type="button" aria-label="Task View" className={btn}>
        <svg viewBox="0 0 18 16" className="h-4 w-[18px]" fill="none" stroke="#000" strokeWidth="1.200">
          <path d="M1 0v2.500h10V0M1 16v-2.500h10V16M1 5h10v6H1zM15.500 0v3M15.500 8v8" />
          <path d="M14 4h3v3h-3z" fill="#000" stroke="none" />
        </svg>
      </button>
      <button type="button" aria-label="Microsoft Edge" className={`${btn} ml-[2px]`}>
        <svg viewBox="0 0 24 24" className="size-6">
          <defs>
            <linearGradient id="edgeTop" x1="0" x2="1" y1="0" y2="1">
              <stop offset="0" stopColor="#2aa7e0" />
              <stop offset=".5" stopColor="#35c1c9" />
              <stop offset="1" stopColor="#67d653" />
            </linearGradient>
          </defs>
          <path d="M0 11C1 4 6 0 12 0c7 0 12 5 12 10.500 0 4-3 6-6.500 6-3 0-4-1.200-3-2.500 1.500-2 .5-5.500-3.500-5.500C6 8.500 1 9 0 11z" fill="url(#edgeTop)" />
          <path d="M0 11c2-5 10-5.500 13-1-4-1-6 2-5.500 5.500.6 5 6 7.500 10 6.500-9 5-17.500-1.500-17.500-11z" fill="#1267b4" />
          <path d="M9 11c-2.500 4 .5 10 6 10 3.500 0 6-1.800 7.500-4-1.500 1-3 1.300-5 1.300-5 0-8.500-3-8.500-7.300z" fill="#0c4f9c" />
        </svg>
      </button>
      <button type="button" aria-label="File Explorer" className={btn}>
        <svg viewBox="0 0 24 20" className="h-5 w-6">
          <path d="M1 0h8l2 3H1z" fill="#d99a16" />
          <path d="M1 3h20q1 0 1 1v14H1z" fill="#ffd767" />
          <path d="M4 11q0-1 1-1h14q1 0 1 1v9h-4v-4q0-1-1-1H9q-1 0-1 1v4H4z" fill="#4a93cf" />
        </svg>
      </button>
      <button type="button" aria-label="Mail" className={btn}>
        <svg viewBox="0 0 24 20" className="h-5 w-6">
          <path d="M0 6l12-6 12 6v13H0z" fill="#2f3a45" />
          <path d="M1 6h22l-6 4-4 4-2-3z" fill="#eef4f8" />
          <path d="M14 8.500l-3.500 6L11 10z" fill="#2f3a45" />
        </svg>
      </button>
      <button type="button" aria-label="Computer Management" className="flex h-full w-12 items-center justify-center border-b-2 border-[#0e7bd0] bg-[#edf5fa]">
        <Icon name="pc" className="size-6" />
      </button>

      <div className="ml-auto flex h-full items-center">
        <button type="button" aria-label="News and interests" className="px-3">
          <svg viewBox="0 0 24 16" className="h-4 w-6" fill="none" stroke="#000" strokeWidth="1.400">
            <path d="M1 1h19v14H3q-2 0-2-2zM20 4h3v9q0 2-2 2h-1M4 4.500h13M11.500 8H17M11.500 11.500H17" />
            <path d="M4.500 8h4v3.500h-4z" />
          </svg>
        </button>
        <button type="button" aria-label="Show hidden icons" className="px-[6px]">
          <svg viewBox="0 0 12 12" className="size-3"><path d="M1 9l5-5 5 5" fill="none" stroke="#000" strokeWidth="1.200" /></svg>
        </button>
        <button type="button" aria-label="Network" className="px-1">
          <svg viewBox="0 0 16 16" className="size-4" fill="none" stroke="#000" strokeWidth="1">
            <path d="M9 15A7 7 0 1115 8M8 1C3.500 5 3.500 11 7.500 15M8 1c2.500 2 3.500 4 3.500 7M1.500 5.500h13M1.500 10.500H8" />
            <circle cx="12.500" cy="12.500" r="3" />
            <path d="M10.500 14.500l4-4" />
          </svg>
        </button>
        <button type="button" aria-label="Volume" className="pr-[2px] pl-1">
          <svg viewBox="0 0 18 16" className="h-4 w-[18px]">
            <path d="M1 5.500h2.500L7.500 2v11l-4-3.500H1z" fill="none" stroke="#000" strokeWidth="1" />
            <circle cx="12.500" cy="10.500" r="4.800" fill="#d92b36" />
            <path d="M10.700 8.700l3.600 3.600M14.300 8.700l-3.600 3.600" stroke="#fff" strokeWidth="1.200" />
          </svg>
        </button>
        <button type="button" className="flex w-16 flex-col items-center leading-[17px] whitespace-nowrap">
          <span>5:24 AM</span>
          <span>1/22/2022</span>
        </button>
        <button type="button" aria-label="1 new notification" className="relative flex h-full w-12 items-center pl-3">
          <svg viewBox="0 0 16 16" className="size-4">
            <path d="M0 0h16v12H7l-3 4v-4H0z" fill="#000" />
            <path d="M3 3.500h10M3 6h10M3 8.500h10" stroke="#d7d9eb" strokeWidth="1" />
          </svg>
          <span className="absolute top-[19px] left-5 flex size-4 items-center justify-center rounded-full border border-[#777] bg-[#d5d6e2]/80 text-[11px]">1</span>
        </button>
        <span className="h-full w-[5px] border-l border-[#a9abba]" />
      </div>
    </footer>
  )
}

export default function App() {
  return (
    <div className="flex h-screen min-h-[640px] flex-col overflow-hidden font-[Roboto,'Noto_Sans',sans-serif]">
      <div className="relative flex-1 overflow-hidden">
        <Wallpaper />
        <DesktopIcons />
        <ManagementWindow />
        <PropertiesDialog />
        <Cursor />
      </div>
      <Taskbar />
    </div>
  )
}
